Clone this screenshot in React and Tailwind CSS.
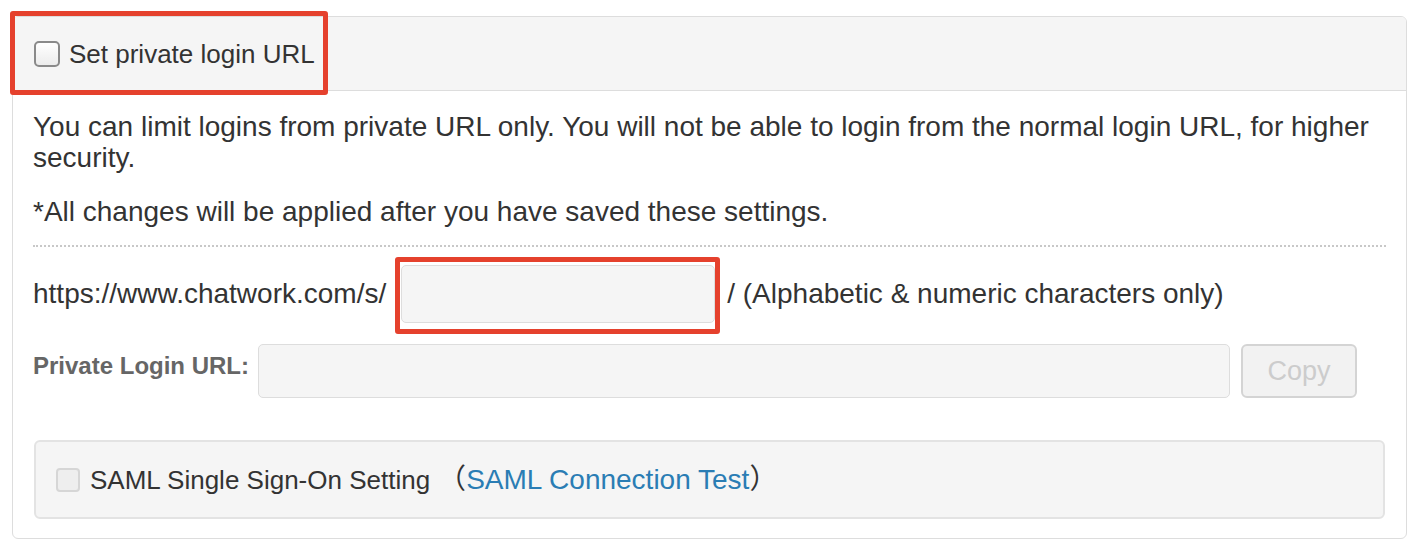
import React from 'react';

const font = { fontFamily: '"Liberation Sans", Arial, "Noto Sans CJK JP", sans-serif' };

const App = () => {
  return (
    <div className="relative w-[1414px] h-[552px] bg-white text-[#333]" style={font}>
      <div className="absolute left-0 top-0 pl-[12px] pt-[16px]">
        <div className="w-[1395px] border border-[#ddd] rounded-[6px] overflow-hidden">
          {/* header */}
          <div className="h-[74px] bg-[#f5f5f5] border-b border-[#ddd] flex items-center px-[21px]">
            <span className="w-[26px] h-[26px] rounded-[5px] border-2 border-[#8a8a8a] bg-gradient-to-b from-white to-[#ececec]" />
            <span className="ml-[9px] text-[26px] leading-none">Set private login URL</span>
          </div>

          {/* body */}
          <div className="px-[20px] pt-[20px] pb-[19px]">
            <p className="text-[28px] leading-[31px]">
              You can limit logins from private URL only. You will not be able to login from the normal login URL, for higher security.
            </p>
            <p className="mt-[23px] text-[28px] leading-[31px]">
              *All changes will be applied after you have saved these settings.
            </p>
            <div className="mt-[18px] border-t-2 border-dotted border-[#c8c8c8]" />

            <div className="mt-[18px] flex items-center">
              <span className="text-[28px] leading-none">https://www.chatwork.com/s/</span>
              <input
                type="text"
                className="ml-[15px] w-[314px] h-[58px] bg-[#f5f5f5] border border-[#ddd] rounded-[5px] outline-none"
              />
              <span className="ml-[12px] text-[28px] leading-none">/ (Alphabetic &amp; numeric characters only)</span>
            </div>

            <div className="mt-[21px] flex items-center">
              <span className="mb-[10px] text-[24px] font-bold text-[#666] leading-none">Private Login URL:</span>
              <input
                type="text"
                disabled
                className="ml-[9px] w-[972px] h-[54px] bg-[#f5f5f5] border border-[#ddd] rounded-[5px]"
              />
              <button className="ml-[11px] w-[116px] h-[54px] bg-[#f2f2f2] border-2 border-[#d4d4d4] rounded-[6px] text-[27px] text-[#cccccc]">
                Copy
              </button>
            </div>

            <div className="mt-[42px] mx-[1px] h-[79px] bg-[#f5f5f5] border-2 border-[#e3e3e3] rounded-[6px] flex items-center px-[20px]">
              <span className="w-[24px] h-[24px] rounded-[4px] border-2 border-[#d6d6d6] bg-[#eeeeee]" />
              <span className="ml-[10px] text-[26px] leading-none">SAML Single Sign-On Setting</span>
              <span className="ml-[8px] text-[28px] leading-none">
                （<a href="#" className="text-[#2a7db4]">SAML Connection Test</a>）
              </span>
            </div>
          </div>
        </div>
      </div>

      {/* annotation boxes */}
      <div className="absolute left-[10px] top-[11px] w-[318px] h-[84px] border-[5px] border-[#e5412d] rounded-[3px]" />
      <div className="absolute left-[395px] top-[257px] w-[325px] h-[77px] border-[5px] border-[#e5412d] rounded-[3px]" />
    </div>
  );
};

export default App;
